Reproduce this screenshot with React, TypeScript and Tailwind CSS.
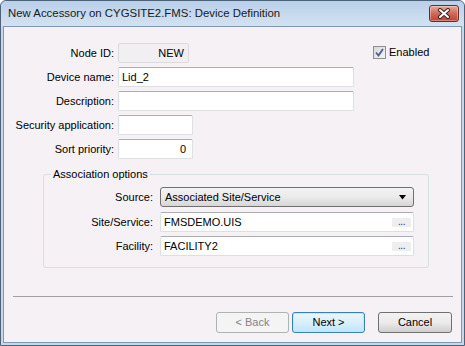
const inputCls =
  "h-[20px] bg-white border border-[#dbdfe6] border-t-[#abadb3] rounded-[2px] px-[3px] flex items-center";

function Label({ children }: { children: string }) {
  return <div className="w-[110px] shrink-0 text-right">{children}</div>;
}

function Dots() {
  return (
    <div className="ml-auto h-[9px] w-[19px] bg-[#eeeef0] flex items-end justify-center text-[10px] leading-[7px] tracking-[-0.5px] text-[#3a2a6a] pb-[2px]">
      ...
    </div>
  );
}

function CloseButton() {
  return (
    <div className="w-[30px] h-[17px] rounded-[3px] border border-[#6b2b23] bg-gradient-to-b from-[#e9a898] via-[#d0685a] to-[#c0432f] flex items-center justify-center shadow-[inset_0_0_0_1px_rgba(255,255,255,0.35)]">
      <svg width="14" height="11" viewBox="0 0 14 11">
        <path d="M3 2 L11 9 M11 2 L3 9" stroke="#3b2320" strokeWidth="4" strokeLinecap="round" />
        <path d="M3 2 L11 9 M11 2 L3 9" stroke="#ffffff" strokeWidth="2" strokeLinecap="round" />
      </svg>
    </div>
  );
}

function Check() {
  return (
    <div className="w-[13px] h-[13px] border border-[#8e8f8f] bg-gradient-to-br from-[#d8d8d8] to-[#f4f4f4] flex items-center justify-center">
      <svg width="9" height="9" viewBox="0 0 9 9">
        <path d="M1 4.5 L3.5 7.5 L8 1" fill="none" stroke="#4a5f96" strokeWidth="1.8" />
      </svg>
    </div>
  );
}

export default function App() {
  return (
    <div className="w-[465px] h-[346px] flex flex-col bg-[#c6d8ec] border border-[#4d6179] rounded-t-[6px] font-['Liberation_Sans',Arial,sans-serif] text-[11px] text-black">
      <div className="h-[25px] shrink-0 flex items-center justify-between pl-[7px] pr-[5px] bg-gradient-to-b from-[#b9d0e9] to-[#d3e2f2] rounded-t-[6px]">
        <span className="text-[11.4px] text-[#1a1a1a]">New Accessory on CYGSITE2.FMS: Device Definition</span>
        <CloseButton />
      </div>

      <div className="flex-1 mx-[2px] mb-[2px] bg-[#f5f1f5] border border-[#7f97b3] flex flex-col pt-[16px]">
        <div className="flex flex-col gap-[4px]">
          <div className="h-[20px] flex items-center">
            <Label>Node ID:</Label>
            <div className="ml-[4px] w-[71px] h-[20px] border border-[#dcdadc] bg-[#f2eff2] rounded-[2px] flex items-center justify-end pr-[4px]">
              NEW
            </div>
            <label className="ml-[184px] flex items-center gap-[3px] mt-[-1px]">
              <Check />
              <span>Enabled</span>
            </label>
          </div>
          <div className="h-[20px] flex items-center">
            <Label>Device name:</Label>
            <div className={`${inputCls} ml-[4px] w-[236px]`}>Lid_2</div>
          </div>
          <div className="h-[20px] flex items-center">
            <Label>Description:</Label>
            <div className={`${inputCls} ml-[4px] w-[236px]`}></div>
          </div>
          <div className="h-[20px] flex items-center">
            <Label>Security application:</Label>
            <div className={`${inputCls} ml-[4px] w-[75px]`}></div>
          </div>
          <div className="h-[20px] flex items-center">
            <Label>Sort priority:</Label>
            <div className={`${inputCls} ml-[4px] w-[75px] justify-end pr-[6px]`}>0</div>
          </div>
        </div>

        <fieldset className="mt-[9px] ml-[39px] w-[386px] border border-[#d5dfe5] rounded-[3px] pt-[6px] pb-[11px]">
          <legend className="ml-[7px] px-[2px] leading-[13px]">Association options</legend>
          <div className="h-[20px] flex items-center">
            <div className="w-[109px] shrink-0 text-right">Source:</div>
            <div className="ml-[7px] w-[254px] h-[20px] rounded-[3px] border border-[#707070] bg-gradient-to-b from-[#f2f2f2] via-[#ebebeb] to-[#d6d6d6] flex items-center pl-[4px] pr-[6px]">
              <span>Associated Site/Service</span>
              <svg className="ml-auto" width="8" height="5" viewBox="0 0 8 5">
                <path d="M0 0 H7 L3.5 4.5 Z" fill="#000" />
              </svg>
            </div>
          </div>
          <div className="h-[20px] flex items-center mt-[5px]">
            <div className="w-[109px] shrink-0 text-right">Site/Service:</div>
            <div className={`${inputCls} ml-[7px] w-[254px] pr-[2px]`}>
              <span>FMSDEMO.UIS</span>
              <Dots />
            </div>
          </div>
          <div className="h-[20px] flex items-center mt-[4px]">
            <div className="w-[109px] shrink-0 text-right">Facility:</div>
            <div className={`${inputCls} ml-[7px] w-[254px] pr-[2px]`}>
              <span>FACILITY2</span>
              <Dots />
            </div>
          </div>
        </fieldset>

        <div className="mt-[28px] ml-[9px] mr-[8px] h-px bg-[#a0a0a0]" />

        <div className="mt-[15px] flex justify-end pr-[9px]">
          <button className="w-[73px] h-[21px] rounded-[3px] border border-[#adb2b5] bg-[#f4f4f4] text-[#838383]">
            &lt; Back
          </button>
          <button className="ml-[3px] w-[73px] h-[21px] rounded-[3px] border border-[#3c7fb1] bg-gradient-to-b from-[#eaf6fd] via-[#d9f0fc] to-[#bee6fd] shadow-[inset_0_0_0_1px_#c4e5f6]">
            Next &gt;
          </button>
          <button className="ml-[13px] w-[74px] h-[21px] rounded-[3px] border border-[#707070] bg-gradient-to-b from-[#f2f2f2] via-[#ebebeb] to-[#cfcfcf]">
            Cancel
          </button>
        </div>
      </div>
    </div>
  );
}
